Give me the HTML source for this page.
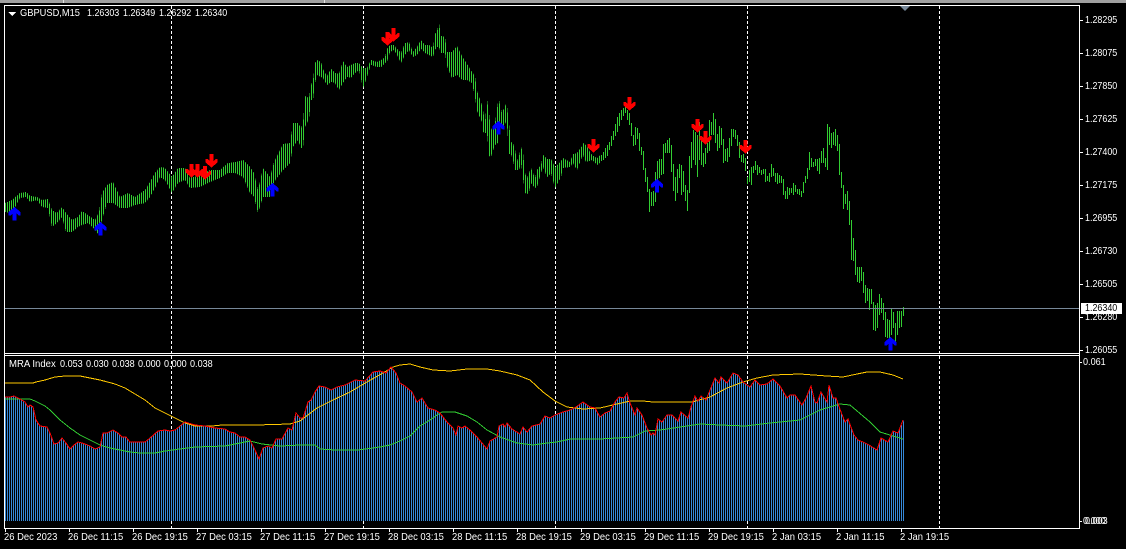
<!DOCTYPE html>
<html>
<head>
<meta charset="utf-8">
<title>GBPUSD,M15</title>
<style>
html,body{margin:0;padding:0;background:#000;width:1126px;height:549px;overflow:hidden}
#c{position:relative;width:1126px;height:549px;overflow:hidden;background:#000}
svg{position:absolute;left:0;top:0}
.t{position:absolute;font:10.5px/12px "Liberation Sans",sans-serif;color:#fff;white-space:pre;transform:scaleX(.85);transform-origin:0 0}
.d{transform:scaleX(.895);top:531px}
.n{transform:scaleX(.865)}
</style>
</head>
<body>
<div id="c">
<svg width="1126" height="549" viewBox="0 0 1126 549" xmlns="http://www.w3.org/2000/svg">
<defs>
<pattern id="g" patternUnits="userSpaceOnUse" x="5" y="0" width="2" height="2"><rect width="1" height="2" fill="#32cd32"/></pattern>
<pattern id="b" patternUnits="userSpaceOnUse" x="5" y="0" width="2" height="2"><rect width="1" height="2" fill="#3588d8"/></pattern>
<polygon id="up" points="0,0 6,5 6,8.5 4,8.5 2,6.5 2,13.5 -2,13.5 -2,6.5 -4,8.5 -6,8.5 -6,5" fill="#0000ff" shape-rendering="crispEdges"/>
<polygon id="dn" points="0,13.5 6,8.5 6,5 4,5 2,7 2,0 -2,0 -2,7 -4,5 -6,5 -6,8.5" fill="#ff0000" shape-rendering="crispEdges"/>
</defs>
<rect x="0" y="0" width="1126" height="3" fill="#a0a0a0"/>
<rect x="63" y="0" width="1" height="3" fill="#e4e4e4"/>
<rect x="324" y="0" width="1" height="3" fill="#e4e4e4"/>
<g stroke="#fff" stroke-width="1" stroke-dasharray="3 2" shape-rendering="crispEdges">
<path d="M171.5 6V528M363.5 6V528M555.5 6V528M747.5 6V528M939.5 6V528"/>
</g>
<polygon shape-rendering="crispEdges" fill="url(#g)" points="5,203 12,200 20,193 26,192 30,196 37,197 42,200 48,199 52,210 57,213 62,207 66,213 72,220 78,217 82,211 88,215 95,220 99,212 102,193 107,185 113,182 120,197 128,193 135,197 145,190 150,182 155,173 160,167 165,168 172,177 178,168 185,168 190,178 200,175 210,170 220,170 228,163 235,162 243,160 250,167 254,173 258,190 263,168 270,177 274,162 283,144 290,143 293,123 298,123 301,128 303,123 305,96 309,98 311,85 313,80 315,63 317,60 321,62 323,69 327,76 331,69 335,73 339,74 343,61 347,67 351,65 355,63 359,63 363,68 367,68 371,60 377,62 381,60 385,57 387,49 390,45 394,45 397,49 401,53 405,43 409,42 413,52 417,47 421,40 425,45 429,45 433,48 435,34 437,31 439,23 441,36 445,37 447,52 449,52 452,52 457,46 462,56 467,64 472,72 475,76 477,91 482,105 483,110 485,122 487,99 489,113 491,130 495,123 498,102 499,100 502,113 506,104 507,106 509,123 511,142 513,143 515,149 517,161 519,156 521,147 523,152 525,173 527,178 529,173 531,168 535,178 537,170 541,165 543,155 547,159 551,159 555,167 561,161 563,158 570,162 573,154 577,153 582,146 583,143 586,145 592,155 597,158 600,155 600,163 597,165 592,160 586,162 583,155 582,157 577,170 573,163 570,167 563,168 561,177 555,188 551,173 547,177 543,167 541,173 537,187 535,188 531,183 529,192 527,194 525,193 523,178 521,163 519,170 517,170 515,170 513,160 511,154 509,154 507,125 506,122 502,130 499,120 498,143 495,145 491,157 489,156 487,133 485,133 483,132 482,122 477,111 475,97 472,83 467,80 462,80 457,75 452,78 449,71 447,66 445,53 441,53 439,47 437,47 435,50 433,57 429,55 425,53 421,49 417,55 413,57 409,50 405,55 401,63 397,55 394,50 390,52 387,62 385,63 381,67 377,67 371,65 367,77 363,88 359,70 355,73 351,78 347,77 343,83 339,90 335,83 331,82 327,85 323,78 321,77 317,75 315,83 313,100 311,100 309,119 305,127 303,148 301,148 298,140 293,147 290,163 283,170 274,182 270,197 263,197 258,213 254,197 250,193 243,177 235,173 228,173 220,178 210,182 200,187 190,188 185,180 178,183 172,193 165,180 160,177 155,188 150,197 145,203 135,205 128,208 120,208 113,203 107,203 102,220 99,235 95,230 88,223 82,225 78,227 72,232 66,232 62,217 57,223 52,227 48,208 42,207 37,200 30,202 26,197 20,198 12,213 5,212"/>
<path fill="none" stroke="#32cd32" stroke-width="1" shape-rendering="crispEdges" d="M601.5 155V161M603.5 152V160M605.5 148V158M607.5 145V156M609.5 142V150M611.5 136V146M613.5 131V140M615.5 124V136M617.5 117V132M619.5 113V126M621.5 110V120M623.5 108V116M625.5 106V113M627.5 110V120M629.5 113V125M631.5 123V136M633.5 135V146M635.5 127V145M637.5 128V139M639.5 133V151M641.5 147V155M643.5 151V170M645.5 168V182M647.5 177V192M649.5 189V212M651.5 192V206M653.5 191V206M655.5 172V202M657.5 161V180M659.5 159V178M661.5 159V175M663.5 144V174M665.5 143V153M667.5 140V153M669.5 138V153M671.5 145V172M673.5 164V191M675.5 177V201M677.5 169V193M679.5 164V178M681.5 165V195M683.5 171V192M685.5 185V201M687.5 190V211M689.5 156V193M691.5 142V168M693.5 130V160M695.5 132V165M697.5 135V177M699.5 122V160M701.5 138V165M703.5 153V167M705.5 148V164M707.5 143V153M709.5 120V151M711.5 122V135M713.5 113V135M715.5 119V143M717.5 134V151M719.5 126V148M721.5 128V145M723.5 139V163M725.5 149V161M727.5 148V162M729.5 138V157M731.5 129V146M733.5 129V137M735.5 130V139M737.5 135V146M739.5 142V158M741.5 155V162M743.5 154V163M745.5 158V171M747.5 177V184M749.5 170V182M751.5 167V185M753.5 166V173M755.5 161V170M757.5 165V175M759.5 167V173M761.5 170V175M763.5 169V174M765.5 169V182M767.5 176V181M769.5 173V182M771.5 164V177M773.5 168V176M775.5 173V182M777.5 173V184M779.5 175V183M781.5 176V183M783.5 179V195M785.5 191V199M787.5 187V199M789.5 188V195M791.5 188V193M793.5 183V195M795.5 185V192M797.5 189V194M799.5 189V195M801.5 191V197M803.5 182V193M805.5 176V183M807.5 168V179M809.5 152V170M811.5 158V167M813.5 162V167M815.5 159V166M817.5 159V171M819.5 158V174M821.5 151V163M823.5 148V163M825.5 158V167M827.5 124V170M829.5 127V145M831.5 133V148M833.5 132V145M835.5 129V146M837.5 135V151M839.5 144V175M841.5 172V188M843.5 185V209M845.5 194V204M847.5 191V210M849.5 201V225M851.5 220V260M853.5 238V261M855.5 250V275M857.5 267V282M859.5 267V283M861.5 267V281M863.5 272V293M865.5 285V303M867.5 288V301M869.5 289V310M871.5 289V304M873.5 302V330M875.5 305V331M877.5 303V328M879.5 294V315M881.5 298V313M883.5 303V320M885.5 312V337M887.5 319V338M889.5 320V338M891.5 308V335M893.5 312V328M895.5 323V342M897.5 311V335M899.5 311V328M901.5 311V327M903.5 307V316"/>
<polygon shape-rendering="crispEdges" fill="url(#b)" points="5,521 5,397 10,397 14,396 20,399 25,402 28,407 30,405 33,407 36,420 40,426 47,427 50,433 54,444 58,443 62,438 66,443 70,449 74,445 78,442 82,443 85,444 90,446 95,449 100,447 103,433 107,433 113,430 118,433 122,437 126,437 130,442 136,442 145,442 150,438 158,431 165,430 170,431 175,430 180,426 185,422 195,425 205,426 215,428 225,429 230,432 235,433 240,437 245,437 250,440 255,450 259,459 263,448 268,446 272,448 276,439 282,439 288,428 292,430 296,413 300,418 303,418 305,412 308,402 311,400 315,392 319,386 325,387 331,390 337,387 345,385 355,380 365,381 373,372 380,371 386,373 391,367 396,373 400,383 405,386 412,392 417,402 422,398 428,408 435,410 440,413 447,422 453,428 456,435 458,426 462,428 465,426 470,430 477,437 487,449 490,441 497,437 499,426 503,424 505,427 507,423 512,429 520,434 523,427 527,432 532,426 540,424 545,416 550,418 555,415 563,412 570,410 576,407 583,402 590,407 595,408 600,417 605,413 610,411 615,402 619,397 624,398 627,393 630,403 635,415 637,408 642,415 647,428 651,435 653,433 655,435 658,419 662,422 667,415 672,415 678,421 681,412 688,418 691,407 695,396 698,401 701,396 706,400 710,390 715,378 719,383 721,377 727,383 733,373 738,375 743,382 750,387 755,380 760,385 767,384 773,379 780,386 787,398 790,395 795,395 802,405 806,398 811,386 815,402 817,403 821,392 827,402 829,385 833,398 836,398 841,412 845,422 848,419 851,427 854,435 858,440 863,442 869,445 877,450 881,438 888,442 893,431 898,433 904,420 904,521"/>
<polyline fill="none" stroke="#ffc800" stroke-width="1" shape-rendering="crispEdges" points="5,383 33,383 36,382 45,380 55,377 65,376 80,376 90,378 100,380 115,384 125,388 135,394 145,400 155,408 165,413 175,418 185,423 195,426 212,426 222,425 256,425 290,424 300,421 317,408 333,400 350,392 367,382 383,373 393,367 400,365 410,364 420,367 433,370 450,371 467,369 487,369 500,371 517,375 530,380 543,392 555,401 567,407 583,409 600,408 630,401 643,401 653,402 667,402 680,402 692,402 710,397 727,388 743,382 757,378 773,375 800,374 827,376 843,377 857,374 867,372 880,372 893,375 903,379"/>
<polyline fill="none" stroke="#32cd32" stroke-width="1" shape-rendering="crispEdges" points="5,399 30,399 35,401 45,406 50,410 60,420 70,428 80,435 90,440 100,445 110,448 130,452 140,453 155,453 165,451 180,449 195,447 225,446 240,443 250,441 262,444 280,446 300,445 315,445 320,449 335,450 358,450 380,447 390,445 400,441 410,436 420,426 430,420 440,413 442,412 455,412 467,416 477,422 487,430 500,437 517,443 533,445 547,443 557,442 570,439 600,439 633,437 645,431 660,430 680,427 700,424 720,425 745,426 770,423 800,420 820,410 840,404 850,405 870,422 880,432 893,436 903,439"/>
<polyline fill="none" stroke="#ff0000" stroke-width="1" shape-rendering="crispEdges" points="5,397 10,397 14,396 20,399 25,402 28,407 30,405 33,407 36,420 40,426 47,427 50,433 54,444 58,443 62,438 66,443 70,449 74,445 78,442 82,443 85,444 90,446 95,449 100,447 103,433 107,433 113,430 118,433 122,437 126,437 130,442 136,442 145,442 150,438 158,431 165,430 170,431 175,430 180,426 185,422 195,425 205,426 215,428 225,429 230,432 235,433 240,437 245,437 250,440 255,450 259,459 263,448 268,446 272,448 276,439 282,439 288,428 292,430 296,413 300,418 303,418 305,412 308,402 311,400 315,392 319,386 325,387 331,390 337,387 345,385 355,380 365,381 373,372 380,371 386,373 391,367 396,373 400,383 405,386 412,392 417,402 422,398 428,408 435,410 440,413 447,422 453,428 456,435 458,426 462,428 465,426 470,430 477,437 487,449 490,441 497,437 499,426 503,424 505,427 507,423 512,429 520,434 523,427 527,432 532,426 540,424 545,416 550,418 555,415 563,412 570,410 576,407 583,402 590,407 595,408 600,417 605,413 610,411 615,402 619,397 624,398 627,393 630,403 635,415 637,408 642,415 647,428 651,435 653,433 655,435 658,419 662,422 667,415 672,415 678,421 681,412 688,418 691,407 695,396 698,401 701,396 706,400 710,390 715,378 719,383 721,377 727,383 733,373 738,375 743,382 750,387 755,380 760,385 767,384 773,379 780,386 787,398 790,395 795,395 802,405 806,398 811,386 815,402 817,403 821,392 827,402 829,385 833,398 836,398 841,412 845,422 848,419 851,427 854,435 858,440 863,442 869,445 877,450 881,438 888,442 893,431 898,433 903,420"/>
<rect x="5" y="308" width="1074" height="1" fill="#778899"/>
<use href="#up" x="14.5" y="207"/>
<use href="#up" x="100.5" y="222"/>
<use href="#up" x="272.5" y="183"/>
<use href="#up" x="498.5" y="121"/>
<use href="#up" x="657" y="179"/>
<use href="#up" x="890.5" y="337"/>
<use href="#dn" x="191.5" y="164"/>
<use href="#dn" x="197.5" y="164"/>
<use href="#dn" x="205" y="166"/>
<use href="#dn" x="211.5" y="154"/>
<use href="#dn" x="387.5" y="32"/>
<use href="#dn" x="393.5" y="28"/>
<use href="#dn" x="593.5" y="139"/>
<use href="#dn" x="629.5" y="97"/>
<use href="#dn" x="697.5" y="119"/>
<use href="#dn" x="705.5" y="131"/>
<use href="#dn" x="745.5" y="140"/>
<polygon points="900,6 910,6 905,11" fill="#778899"/>
<g fill="#fff" shape-rendering="crispEdges">
<rect x="4" y="5" width="1076" height="1"/>
<rect x="4" y="5" width="1" height="524"/>
<rect x="1079" y="5" width="1" height="524"/>
<rect x="4" y="353" width="1076" height="1"/>
<rect x="4" y="355" width="1076" height="1"/>
<rect x="4" y="528" width="1076" height="1"/>
<path d="M5 529h1v3h-1zM69 529h1v3h-1zM133 529h1v3h-1zM197 529h1v3h-1zM261 529h1v3h-1zM325 529h1v3h-1zM389 529h1v3h-1zM453 529h1v3h-1zM517 529h1v3h-1zM581 529h1v3h-1zM645 529h1v3h-1zM709 529h1v3h-1zM773 529h1v3h-1zM837 529h1v3h-1zM901 529h1v3h-1z"/>
<path d="M1080 20h3v1h-3zM1080 53h3v1h-3zM1080 86h3v1h-3zM1080 119h3v1h-3zM1080 152h3v1h-3zM1080 185h3v1h-3zM1080 218h3v1h-3zM1080 251h3v1h-3zM1080 284h3v1h-3zM1080 317h3v1h-3zM1080 350h3v1h-3zM1080 362h2v1h-2zM1080 521h2v1h-2z"/>
<polygon points="8,12 16,12 12,16"/>
</g>
</svg>
<div class="t" style="left:20px;top:7px;transform:scaleX(.886)">GBPUSD,M15</div>
<div class="t" style="left:86.5px;top:7px">1.26303</div>
<div class="t" style="left:122.5px;top:7px">1.26349</div>
<div class="t" style="left:158.5px;top:7px">1.26292</div>
<div class="t" style="left:194.5px;top:7px">1.26340</div>
<div class="t" style="left:9px;top:358px;transform:scaleX(.91)">MRA Index</div>
<div class="t n" style="left:59.5px;top:358px">0.053</div>
<div class="t n" style="left:85.5px;top:358px">0.030</div>
<div class="t n" style="left:111.5px;top:358px">0.038</div>
<div class="t n" style="left:137.5px;top:358px">0.000</div>
<div class="t n" style="left:163.5px;top:358px">0.000</div>
<div class="t n" style="left:189.5px;top:358px">0.038</div>
<div class="t" style="left:1085px;top:14px">1.28295</div>
<div class="t" style="left:1085px;top:47px">1.28075</div>
<div class="t" style="left:1085px;top:80px">1.27850</div>
<div class="t" style="left:1085px;top:113px">1.27625</div>
<div class="t" style="left:1085px;top:146px">1.27400</div>
<div class="t" style="left:1085px;top:179px">1.27175</div>
<div class="t" style="left:1085px;top:212px">1.26955</div>
<div class="t" style="left:1085px;top:245px">1.26730</div>
<div class="t" style="left:1085px;top:278px">1.26505</div>
<div class="t" style="left:1085px;top:311px">1.26280</div>
<div class="t" style="left:1085px;top:344px">1.26055</div>
<div style="position:absolute;left:1081px;top:303px;width:41px;height:11px;background:#fff"></div>
<div class="t" style="left:1085px;top:302px;color:#000">1.26340</div>
<div class="t n" style="left:1083px;top:356px">0.061</div>
<div class="t n" style="left:1083px;top:515px">0.000</div>
<div class="t n" style="left:1084.5px;top:515px">0.003</div>
<div class="t d" style="left:4px">26 Dec 2023</div>
<div class="t d" style="left:68px">26 Dec 11:15</div>
<div class="t d" style="left:132px">26 Dec 19:15</div>
<div class="t d" style="left:196px">27 Dec 03:15</div>
<div class="t d" style="left:260px">27 Dec 11:15</div>
<div class="t d" style="left:324px">27 Dec 19:15</div>
<div class="t d" style="left:388px">28 Dec 03:15</div>
<div class="t d" style="left:452px">28 Dec 11:15</div>
<div class="t d" style="left:516px">28 Dec 19:15</div>
<div class="t d" style="left:580px">29 Dec 03:15</div>
<div class="t d" style="left:644px">29 Dec 11:15</div>
<div class="t d" style="left:708px">29 Dec 19:15</div>
<div class="t d" style="left:772px">2 Jan 03:15</div>
<div class="t d" style="left:836px">2 Jan 11:15</div>
<div class="t d" style="left:900px">2 Jan 19:15</div>
</div>
</body>
</html>
